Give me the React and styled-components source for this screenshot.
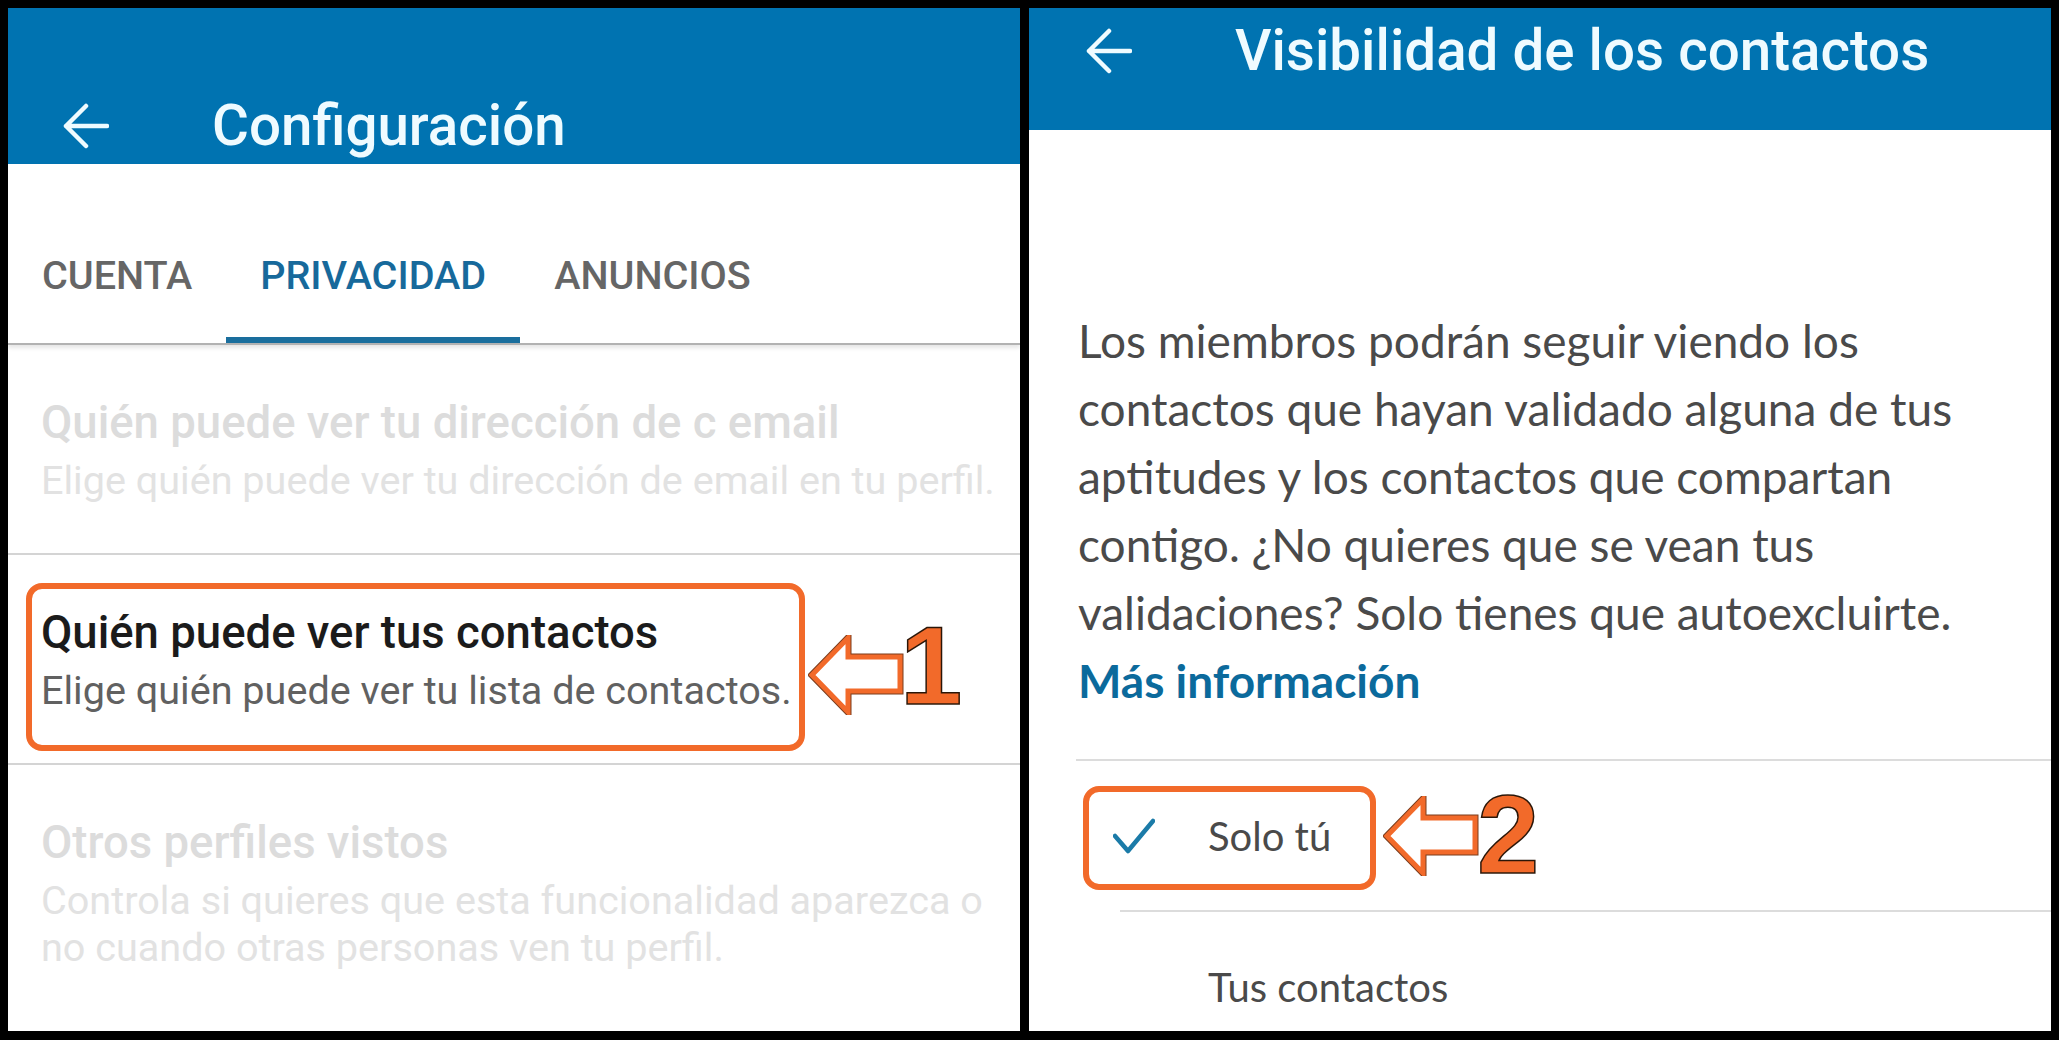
import styled, { createGlobalStyle } from "styled-components";

const GlobalStyle = createGlobalStyle`
  html, body {
    margin: 0;
    padding: 0;
    background: #000;
  }
`;

const Frame = styled.div`
  width: 2059px;
  height: 1040px;
  box-sizing: border-box;
  padding: 8px 8px 9px;
  background: #000;
  display: grid;
  grid-template-columns: 1012px 1022px;
  column-gap: 9px;
`;

const Panel = styled.section`
  background: #fff;
  display: flex;
  flex-direction: column;
  overflow: hidden;
`;

const Header = styled.header`
  flex: none;
  height: ${(p) => p.$h}px;
  box-sizing: border-box;
  padding: ${(p) => p.$pt}px 0 ${(p) => p.$pb}px ${(p) => p.$pl}px;
  background: #0073b1;
  display: flex;
  align-items: center;
  gap: 103px;
`;

const HeaderTitle = styled.h1`
  margin: 0;
  font: 500 56.5px/1 Roboto, "Liberation Sans", sans-serif;
  color: #effbff;
  white-space: nowrap;
`;

const TabBar = styled.nav`
  flex: none;
  display: flex;
  height: 181px;
  box-sizing: border-box;
  border-bottom: 2px solid #b2b2b2;
  box-shadow: 0 3px 4px rgba(0, 0, 0, 0.1);
`;

const Tab = styled.div`
  height: 179px;
  box-sizing: border-box;
  padding: 92px 34px 0;
  font: 500 39.6px/40px Roboto, "Liberation Sans", sans-serif;
  color: ${(p) => (p.$active ? "#17699b" : "#666")};
  border-bottom: 6px solid ${(p) => (p.$active ? "#1a6e9d" : "transparent")};
`;

const Item = styled.div`
  position: relative;
  flex: none;
  height: 210px;
  box-sizing: border-box;
  padding: 53px 25px 0 33px;
  border-bottom: ${(p) => (p.$last ? "none" : "2px solid #d4d4d4")};
`;

const ItemTitle = styled.div`
  font: 500 45.5px/50px Roboto, "Liberation Sans", sans-serif;
  color: ${(p) => (p.$faded ? "#dcdcdc" : "#1b1b1b")};
  margin-bottom: 9px;
  white-space: nowrap;
`;

const ItemText = styled.div`
  font: 400 39.6px/47px Roboto, "Liberation Sans", sans-serif;
  color: ${(p) => (p.$faded ? "#e2e2e2" : "#616161")};
  white-space: nowrap;
`;

const Highlight = styled.div`
  position: absolute;
  left: ${(p) => p.$x}px;
  top: ${(p) => p.$y}px;
  width: ${(p) => p.$w}px;
  height: ${(p) => p.$h}px;
  box-sizing: border-box;
  border: 6px solid #f26a2a;
  border-radius: 16px;
  pointer-events: none;
`;

const Callout = styled.div`
  position: absolute;
  left: ${(p) => p.$x}px;
  top: ${(p) => p.$y}px;
  display: flex;
  align-items: flex-start;
`;

const Num = styled.span`
  margin: ${(p) => p.$dy}px 0 0 ${(p) => p.$dx}px;
  font: 700 112px/1 "Liberation Sans", Arial, sans-serif;
  color: #f26a2a;
  -webkit-text-stroke: 1.5px #2a1608;
`;

const Body = styled.div`
  padding: 177px 0 0 49px;
`;

const Para = styled.p`
  margin: 0;
  font: 400 46px/68px Lato, "Open Sans", sans-serif;
  color: #4a4a4a;
  white-space: nowrap;
`;

const Link = styled.a`
  display: block;
  font-weight: 700;
  color: #0b6a9c;
  text-decoration: none;
`;

const Options = styled.div`
  margin: 44px 0 0 -2px;
  border-top: 2px solid #dcdcdc;
`;

const Option = styled.div`
  position: relative;
  height: 151px;
  box-sizing: border-box;
  margin-left: 44px;
  border-bottom: 2px solid #dcdcdc;
  display: flex;
  align-items: center;
`;

const CheckCell = styled.div`
  width: 95px;
  margin-left: -7px;
  display: flex;
  align-items: center;
`;

const OptionLabel = styled.span`
  font: 400 40px/1 Lato, "Open Sans", sans-serif;
  color: #4a4a4a;
`;

const BackArrow = () => (
  <svg width="46" height="46" viewBox="0 0 46 46">
    <path
      d="M44 23H3M23 3L3 23L23 43"
      fill="none"
      stroke="#effbff"
      strokeWidth="4.5"
      strokeLinecap="round"
      strokeLinejoin="round"
    />
  </svg>
);

const HollowArrow = () => (
  <svg width="96" height="80" viewBox="0 0 96 80">
    <polygon
      points="4,40 40,3 40,22 92,22 92,56 40,56 40,77"
      fill="#fff"
      stroke="#7a3c1c"
      strokeWidth="7"
      strokeLinejoin="miter"
    />
    <polygon
      points="4,40 40,3 40,22 92,22 92,56 40,56 40,77"
      fill="#fff"
      stroke="#f26a2a"
      strokeWidth="5"
      strokeLinejoin="miter"
    />
  </svg>
);

const Check = () => (
  <svg width="42" height="36" viewBox="0 0 42 36">
    <path
      d="M2 18L15 33L40 3"
      fill="none"
      stroke="#1b7ba8"
      strokeWidth="4.5"
      strokeLinecap="round"
      strokeLinejoin="round"
    />
  </svg>
);

const items = [
  {
    title: "Quién puede ver tu dirección de c email",
    text: ["Elige quién puede ver tu dirección de email en tu perfil."],
    faded: true,
  },
  {
    title: "Quién puede ver tus contactos",
    text: ["Elige quién puede ver tu lista de contactos."],
    marked: true,
  },
  {
    title: "Otros perfiles vistos",
    text: [
      "Controla si quieres que esta funcionalidad aparezca o",
      "no cuando otras personas ven tu perfil.",
    ],
    faded: true,
    last: true,
  },
];

const paragraph = [
  "Los miembros podrán seguir viendo los",
  "contactos que hayan validado alguna de tus",
  "aptitudes y los contactos que compartan",
  "contigo. ¿No quieres que se vean tus",
  "validaciones? Solo tienes que autoexcluirte.",
];

const App = () => {
  return (
    <>
      <GlobalStyle />
      <Frame>
        <Panel>
          <Header $h={156} $pt={80} $pb={0} $pl={55}>
            <BackArrow />
            <HeaderTitle>Configuración</HeaderTitle>
          </Header>
          <TabBar>
            <Tab>CUENTA</Tab>
            <Tab $active>PRIVACIDAD</Tab>
            <Tab>ANUNCIOS</Tab>
          </TabBar>
          {items.map((item) => (
            <Item key={item.title} $last={item.last}>
              <ItemTitle $faded={item.faded}>{item.title}</ItemTitle>
              {item.text.map((line) => (
                <ItemText key={line} $faded={item.faded}>
                  {line}
                </ItemText>
              ))}
              {item.marked && (
                <>
                  <Highlight $x={18} $y={28} $w={779} $h={168} />
                  <Callout $x={800} $y={80}>
                    <HollowArrow />
                    <Num $dx={-4} $dy={-25}>1</Num>
                  </Callout>
                </>
              )}
            </Item>
          ))}
        </Panel>

        <Panel>
          <Header $h={122} $pt={0} $pb={36} $pl={57}>
            <BackArrow />
            <HeaderTitle>Visibilidad de los contactos</HeaderTitle>
          </Header>
          <Body>
            <Para>
              {paragraph.map((line) => (
                <span key={line}>
                  {line}
                  <br />
                </span>
              ))}
              <Link href="#">Más información</Link>
            </Para>
            <Options>
              <Option>
                <CheckCell>
                  <Check />
                </CheckCell>
                <OptionLabel>Solo tú</OptionLabel>
                <Highlight $x={-37} $y={25} $w={293} $h={104} />
                <Callout $x={263} $y={35}>
                  <HollowArrow />
                  <Num $dx={-2} $dy={-17}>2</Num>
                </Callout>
              </Option>
              <Option>
                <CheckCell />
                <OptionLabel>Tus contactos</OptionLabel>
              </Option>
            </Options>
          </Body>
        </Panel>
      </Frame>
    </>
  );
};

export default App;
